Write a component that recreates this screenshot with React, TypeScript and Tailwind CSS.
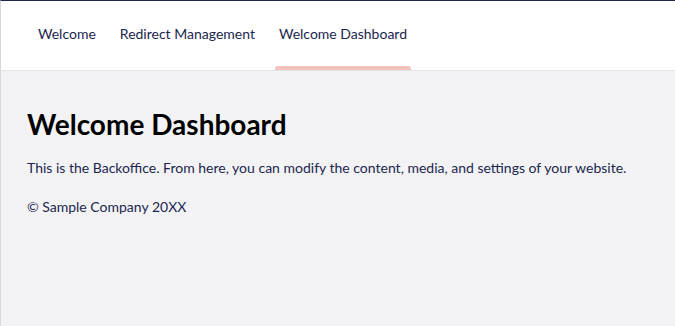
import React from "react";

export default function App() {
  const tabs = ["Welcome", "Redirect Management", "Welcome Dashboard"];
  const active = 2;
  return (
    <div
      className="w-full h-[326px] flex flex-col border-t border-t-[#1b264f] border-l border-l-[#d8d7d9] bg-[#f3f3f5] overflow-hidden"
      style={{ fontFamily: "Lato, 'Noto Sans', sans-serif" }}
    >
      <div className="h-[70px] shrink-0 bg-white border-b border-b-[#e3e3e6] flex items-stretch pl-[25px]">
        {tabs.map((t, i) => (
          <div key={t} className="relative flex items-center px-3 text-[14px] text-[#1b264f]">
            <span className="-mt-[4px]">{t}</span>
            {i === active && (
              <div className="absolute left-[8px] right-[8px] bottom-0 h-[4px] rounded-t-[3px] bg-[#f5c1bc]" />
            )}
          </div>
        ))}
      </div>
      <div className="px-[26px] pt-[35px] text-[#1b264f]">
        <h1 className="text-[28px] font-bold leading-[36px] text-black m-0">Welcome Dashboard</h1>
        <p className="mt-[16px] text-[14px] leading-[20px]">
          This is the Backoffice. From here, you can modify the content, media, and settings of your website.
        </p>
        <p className="mt-[19px] text-[14px] leading-[20px]">© Sample Company 20XX</p>
      </div>
    </div>
  );
}
